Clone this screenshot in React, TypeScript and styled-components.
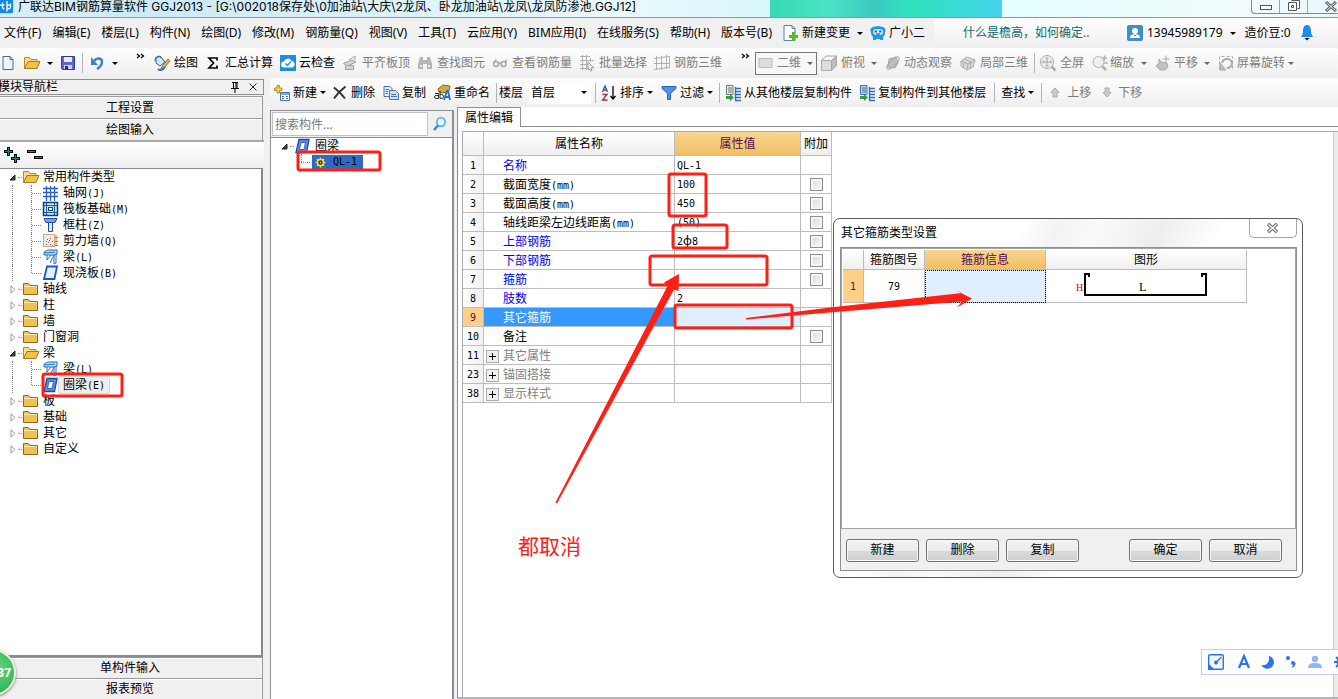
import React from 'react';
import styled, { createGlobalStyle, css } from 'styled-components';

const GlobalStyle = createGlobalStyle`
  * { box-sizing: border-box; }
  html, body { margin: 0; height: 100%; overflow: hidden; }
  body, button, input, select, table {
    font-family: "Noto Sans", "Noto Sans CJK SC", sans-serif;
    font-size: 12px;
    line-height: 16px;
    color: #000;
  }
  button, input, select { margin: 0; padding: 0; border: 0; background: none; }
  ul { margin: 0; padding: 0; list-style: none; }
`;

/* ---------- shared pieces ---------- */

const HalfWidth = styled.span`
  font-family: "DejaVu Sans Mono", monospace;
  font-size: 10px;
  line-height: 12px;
`;

/* Grid and tree labels set their Latin characters half as wide as the Chinese ones. */
const Mixed = ({ text }: { text: string }) => (
  <>
    {text.split(/([\x20-\x7e]+)/).map((part, i) =>
      i % 2 ? <HalfWidth key={i}>{part}</HalfWidth> : part
    )}
  </>
);

const Caret = styled.i<{ $dim?: boolean; $gap?: number }>`
  width: 0;
  height: 0;
  flex: none;
  margin-left: ${p => p.$gap ?? 0}px;
  border: 3px solid transparent;
  border-bottom: 0;
  border-top-color: ${p => (p.$dim ? '#666' : '#000')};
`;

const Svg = styled.svg`
  display: block;
  flex: none;
  overflow: visible;
`;

type IconName = keyof typeof shapes;

const shapes = {
  app: (
    <>
      <rect x="-1" y="-1" width="16" height="16" rx="2" fill="#1488e4" />
      <path d="M0 6h5M8 1v12M8 6h4M3 3v4a2 2 0 0 0 2 3M12 4v4a2 2 0 0 1-4 0" fill="none" stroke="#fff" strokeWidth="1.500" />
    </>
  ),
  file: <path d="M3 1.500h7l3 3v10H3z M10 1.500v3h3" fill="#eef5fc" stroke="#4c6a8c" />,
  folderOpen: (
    <>
      <path d="M.5 13.500v-11h5l1.500 2H13v4" fill="#f9dc86" stroke="#b48a2c" />
      <path d="M.5 13.500 4 6.500h12l-3 7z" fill="#f3bf4b" stroke="#a67a1e" />
    </>
  ),
  save: (
    <>
      <path d="M1.500 1.500h13v13h-12l-1-1z" fill="#5a68cf" stroke="#2c3a9a" />
      <path d="M4 2h8v5H4z" fill="#e9edff" />
      <path d="M4 10h8v4H4z" fill="#cfd5e8" />
      <path d="M5 11h3v3H5z" fill="#26307c" />
    </>
  ),
  undo: (
    <>
      <path d="M5 6c3-4 8-3 8 1 0 3-2 5-5 7" fill="none" stroke="#3f7fd0" strokeWidth="2.500" />
      <path d="M2 2v8h7z" fill="#3f7fd0" />
    </>
  ),
  paint: (
    <>
      <path d="M2 3l4-2 5 6-5 4-4-3z" fill="#d6e6f8" stroke="#355f92" />
      <path d="M1 6c0-5 4-6 6-3" fill="none" stroke="#355f92" />
      <path d="M9 10l5-6 2 2-5 6-5 3z" fill="#e7b94d" stroke="#6a5a30" strokeWidth=".8" />
      <path d="M4 14c2 2 5 1 7-2" fill="none" stroke="#2f74c8" strokeWidth="2" />
    </>
  ),
  sum: <path d="M12 5.500V3H4l4.500 5L4 13h8v-2.500" fill="none" stroke="#000" strokeWidth="1.700" />,
  cloud: (
    <>
      <rect width="16" height="16" fill="#1d8fd6" />
      <path d="M4 12.500a3 3 0 0 1 0-6 4 4 0 0 1 7.500-.5 3.300 3.300 0 0 1 .5 6.500z" fill="#fff" />
      <path d="M5.500 8.500l2 2 3.500-4" fill="none" stroke="#1d8fd6" strokeWidth="1.300" />
    </>
  ),
  align: (
    <g fill="#d4d4d4" stroke="#a2a2a2">
      <path d="M1.500 8.500 10 5l4 2-8.500 4z" />
      <path d="M3.500 10.500h8v4h-8z" />
      <path d="M7 5l6-4v4" fill="none" />
    </g>
  ),
  find: (
    <g fill="#b5b5b5">
      <path d="M3 2h3v3h4V2h3l2 7v5h-5V9H6v5H1V9z" />
      <path d="M3 10h2v2H3zM11 10h2v2h-2z" fill="#eee" />
    </g>
  ),
  glasses: (
    <g fill="none" stroke="#a6a6a6" strokeWidth="1.500">
      <circle cx="4" cy="9" r="2.500" />
      <circle cx="11.500" cy="9" r="2.500" />
      <path d="M6.500 8.500h2.500M2 8 4 4.500M14 8V4.500" />
    </g>
  ),
  batch: (
    <g fill="none" stroke="#b0b0b0">
      <path d="M1 1.500h10M1 5.500h14M1 9.500h8M1 13.500h8M3.500 0v15M7.500 0v15M11.500 3v4" />
      <path d="M9 7l6 6h-3l1 3-4-2z" fill="#eee" stroke="#999" />
    </g>
  ),
  grid3d: (
    <path d="M0 3.500 15 1.500M0 8.500h15M0 14.500l15-2M2.500 1v14M7.500 1v14M12.500 0v14M15.500 1v12" fill="none" stroke="#b0b0b0" />
  ),
  plane: <rect x="1" y="3.500" width="13" height="9" fill="#ddd" stroke="#bbb" />,
  cube: (
    <g stroke="#a8a8a8" strokeLinejoin="round">
      <path d="M.5 5.500h10v10h-10z" fill="#ddd" />
      <path d="M.5 5.500 5 1h10.500l-5 4.500z" fill="#f5f5f5" />
      <path d="M10.500 5.500l5-4.500v9.500l-5 5z" fill="#bdbdbd" />
    </g>
  ),
  orbit: (
    <g fill="#bfbfbf" stroke="#a8a8a8">
      <path d="M4 4l7-2 2 6-3 5-7-1z" />
      <ellipse cx="8" cy="8" rx="8" ry="3" fill="none" transform="rotate(-45 8 8)" />
    </g>
  ),
  localCube: (
    <g fill="#dedede" stroke="#a8a8a8">
      <path d="M1 6l6-4 8 3-2 7-6 3-6-4z" />
      <path d="M1 6l7 3 7-4M8 9l-1 6M4 4l7 3-1 6M4 7.500 3.500 13" fill="none" />
    </g>
  ),
  fit: (
    <g fill="none" stroke="#aaa">
      <circle cx="7" cy="7" r="6.500" fill="#eee" />
      <path d="M7 2.500v9M2.500 7h9M5.500 4 7 2.500 8.500 4M5.500 10 7 11.500 8.500 10M4 5.500 2.500 7 4 8.500M10 5.500 11.500 7 10 8.500" />
      <path d="M11.500 11.500l4 4" strokeWidth="2.500" />
    </g>
  ),
  zoom: (
    <g fill="none" stroke="#b2b2b2">
      <circle cx="6.500" cy="7" r="5.500" fill="#eee" />
      <path d="M10 11l4 4" strokeWidth="2.500" />
      <path d="M10 3h5M12.500.5v5M12 8h4" strokeWidth="1.500" />
    </g>
  ),
  pan: (
    <g fill="#c2c2c2" stroke="#aaa">
      <path d="M3 9l3-2 6 1 1 4-3 3H5l-4-4z" />
      <path d="M11 .5v7M7.500 4h7" fill="none" />
      <path d="M4 8V4l2 3" />
    </g>
  ),
  rotate: (
    <g fill="none" stroke="#a8a8a8">
      <path d="M1.500 14.500v-13h13v13" strokeDasharray="3 2" />
      <path d="M4 8a5 4.500 0 1 1 5 5" strokeWidth="2" />
      <path d="M2 8v7h6z" fill="#c0c0c0" />
    </g>
  ),
  newItem: (
    <>
      <path d="M6.500 7.500h9v8h-9z" fill="#fff" stroke="#4774b8" />
      <path d="M7 8h8v2H7z" fill="#79a7e6" />
      <path d="M8 11.500h2M12 11.500h2M8 13.500h2M12 13.500h2" stroke="#4774b8" />
      <path d="M3 .5h2.500V3H8v2.500H5.500V8H3V5.500H.5V3H3z" fill="#f4d53b" stroke="#a88210" strokeWidth=".8" />
    </>
  ),
  remove: <path d="M2 2.500c4 3 8 7 11 11M13.500 1.500C9 5 5 9 2 13.500" fill="none" stroke="#333" strokeWidth="2" />,
  copy: (
    <g stroke="#4a73b6">
      <path d="M1 1.500h6l2 2v8H1z" fill="#e4eefb" />
      <path d="M6.500 5.500h6l3 3v6h-9z" fill="#cfe0f7" />
      <path d="M2.500 4.500H6M2.500 6.500H5M2.500 8.500H5M8 9.500h5M8 11.500h6" fill="none" />
    </g>
  ),
  rename: (
    <>
      <path d="M4 4l5-4 7 1-1 5-6 2-4-1z" fill="#d8a83c" stroke="#66501c" strokeWidth=".8" />
      <path d="M1 8.500h3.500v5H2a1.300 1.300 0 0 1 0-3h2M6 6v7.500h1.500a1.800 1.800 0 0 0 0-4H6" fill="none" stroke="#333" />
      <path d="M10 15l3-9h1l2 9M11 12h4" fill="none" stroke="#2d6bd0" strokeWidth="1.800" />
    </>
  ),
  sort: (
    <>
      <path d="M1.500 7 4 1l2.500 6M2.500 5h3" fill="none" stroke="#33588f" strokeWidth="1.300" />
      <path d="M1.500 9.500H6L1.500 15h5" fill="none" stroke="#9c2e36" strokeWidth="1.300" />
      <path d="M12 1v12M9.500 11l2.500 3 2.500-3" fill="none" stroke="#000" strokeWidth="1.300" />
    </>
  ),
  filter: <path d="M1 1.500h14v2L9.500 8.500v6h-3v-6L1 3.500z" fill="#4d90e8" stroke="#2c62b8" />,
  floorCopy: (
    <>
      <path d="M1.500.5H8v9H1.500z" fill="#e6e6e6" stroke="#777" />
      <path d="M3 3h4M3 5h4M3 7h4" stroke="#777" />
      <path d="M10.500 2v13M10 3.500h6M10 6.500h6M10 9.500h6M10 12.500h6M10 15.500h6" stroke="#3070b8" strokeWidth="1.400" />
      <path d="M1 11h4V9l4 3.500L5 16v-2H1z" fill="#2f9e49" />
    </>
  ),
  floorPaste: (
    <>
      <path d="M1.500.5H8v9H1.500z" fill="#bcd5f3" stroke="#3f70b0" />
      <path d="M3 3h4M3 5h4M3 7h4" stroke="#3f70b0" />
      <path d="M10.500 2v13M10 3.500h6M10 6.500h6M10 9.500h6M10 12.500h6M10 15.500h6" stroke="#3070b8" strokeWidth="1.400" />
      <path d="M1 11h4V9l4 3.500L5 16v-2H1z" fill="#2f9e49" />
    </>
  ),
  up: <path d="M8 3l4 4.500H10V12H6V7.500H4z" fill="#ccc" stroke="#aaa" />,
  down: <path d="M8 12l4-4.500H10V3H6v4.500H4z" fill="#ccc" stroke="#aaa" />,
  change: (
    <>
      <path d="M1 .5h8l3 3v12H1z" fill="#fff" stroke="#5b7fa8" />
      <path d="M9 .5v3h3" fill="none" stroke="#5b7fa8" />
      <path d="M9 8h3v3h3v3h-3v3H9v-3H6v-3h3z" fill="#53b635" transform="translate(0 -1)" />
    </>
  ),
  mascot: (
    <>
      <path d="M3 2c2 0 3-1 5-1s3 1 5 1c3 1 3 5 2 5 0 3-1 4-2 5v3h-3v-1H6v1H3v-3C2 11 1 10 1 7 0 6 0 3 3 2z" fill="#1f97e6" />
      <rect x="3" y="4" width="10" height="6" rx="3" fill="#bfe6fd" />
      <circle cx="5.800" cy="6.500" r="1" fill="#114a86" />
      <circle cx="10.200" cy="6.500" r="1" fill="#114a86" />
      <path d="M6 8.500c1 1 3 1 4 0" fill="none" stroke="#114a86" />
    </>
  ),
  user: (
    <>
      <rect width="16" height="16" rx="2" fill="#3c8fc8" />
      <circle cx="8" cy="6" r="3" fill="#fff" />
      <path d="M3 13c0-3 2-4 5-4s5 1 5 4z" fill="#fff" />
      <path d="M6.500 9.500 8 11l1.500-1.500" fill="none" stroke="#3c8fc8" />
    </>
  ),
  bell: (
    <>
      <path d="M8 0c3 0 4 3 4 6 0 3 1 4 2 6H2c1-2 2-3 2-6 0-3 1-6 4-6z" fill="#1e8af0" />
      <path d="M5.500 13h5L8 15.500z" fill="#111" />
    </>
  ),
  folder: (
    <>
      <path d="M.5 13.500v-11h5l1.500 2h7.500v9z" fill="#eec257" stroke="#8f6a1c" />
      <path d="M1 5.500h13" stroke="#fbe7a8" />
    </>
  ),
  axis: (
    <path d="M0 3.500h15M0 7.500h15M0 11.500h15M3.500 1v15M7.500 1v15M11.500 1v15" fill="none" stroke="#2b5fc0" strokeWidth="1.300" />
  ),
  raft: (
    <>
      <rect x=".5" y="1.500" width="14" height="13" fill="#cde3f5" stroke="#0d3f79" strokeWidth="1.500" />
      <path d="M3.500 2v12M11.500 2v12M1 4.500h13M1 11.500h13" stroke="#1a5a9c" />
      <rect x="5.500" y="6.500" width="4" height="3" fill="#fff" stroke="#0d3f79" />
    </>
  ),
  column: (
    <>
      <path d="M1 1.500h13l-2 4H3z" fill="#6fa3ea" stroke="#1c4aa5" />
      <path d="M5.500 5.500h4v9h-4z" fill="#d7e7fb" stroke="#1c4aa5" />
    </>
  ),
  wall: (
    <>
      <rect x=".5" y="1.500" width="11" height="12" fill="#ece8e4" stroke="#d8a87c" />
      <path d="M3 11.500h1M5 9.500h1M7 11.500h1M9 8.500h1M4 6.500h1M7 5.500h1M9 12.500h1M3 8.500h1M6 7.500h1" stroke="#666" />
      <path d="M13 2v11M12 4.500h3M12 8.500h3M12 12.500h3" stroke="#dd6f1e" />
    </>
  ),
  beam: (
    <>
      <path d="M1 3l4-2h9v4l-3 1H1z" fill="#b9dcf7" stroke="#2173c0" />
      <path d="M4 6v5l4-5M7 14l4-8v9l2-1V5M2 4l10-1" fill="none" stroke="#2173c0" />
    </>
  ),
  slab: <path d="M4 1.500h10l-2.500 12.500H1z" fill="#e1eeff" stroke="#2256bd" strokeWidth="1.800" />,
  ring: (
    <>
      <path d="M4 1.500h10L11.500 14.500H1z" fill="#5b8fe6" stroke="#1d4aa8" strokeWidth="1.300" />
      <path d="M6 4.500h4.500L9 11.500H4.500z" fill="#fff" stroke="#1d4aa8" strokeWidth=".8" />
    </>
  ),
  gear: (
    <>
      <path d="M8 2v12M2 8h12M3.800 3.800l8.400 8.400M12.200 3.800l-8.400 8.400" stroke="#ffee1c" strokeWidth="2" />
      <circle cx="8" cy="8" r="3.500" fill="#222" stroke="#ffee1c" strokeWidth="1.500" />
      <circle cx="8" cy="8" r="1" fill="#ffee1c" />
    </>
  ),
  search: (
    <>
      <circle cx="9" cy="6" r="4.200" fill="#e6f5ff" stroke="#6fb8ea" strokeWidth="2" />
      <path d="M6 9.500 2 14" stroke="#3f86cc" strokeWidth="2.500" />
    </>
  ),
  expandAll: (
    <>
      <path d="M0 4.500h9M4.500 0v9M7 11.500h9M11.500 7v9" stroke="#000" strokeWidth="3" />
      <path d="M1 4.500h7M4.500 1v7M8 11.500h7M11.500 8v7" stroke="#0a8f86" />
    </>
  ),
  collapseAll: (
    <>
      <path d="M0 4.500h9M7 10.500h9" stroke="#000" strokeWidth="3" />
      <path d="M1 4.500h7M8 10.500h7" stroke="#0a8f86" />
    </>
  ),
  pin: <path d="M5 3.500h6M6.500 3v6M10 3v6M9 3v6M4 9.500h8M8 10v4" fill="none" stroke="#000" />,
  close: <path d="M4.500 4.500l7 7M11.500 4.500l-7 7" fill="none" stroke="#222" />,
  chevrons: <path d="M1 1l2.500 2L1 5M5 1l2.500 2L5 5" fill="none" stroke="#000" strokeWidth="1.300" />
};

const Icon = ({ name, size = 16 }: { name: IconName; size?: number }) => (
  <Svg width={size} height={size} viewBox="0 0 16 16" aria-hidden="true">
    {shapes[name]}
  </Svg>
);

/* ---------- frame ---------- */

const Page = styled.div`
  position: relative;
  display: flex;
  flex-direction: column;
  height: 100vh;
  overflow: hidden;
  background: #f0f0f0;
  white-space: nowrap;
`;

const TitleBar = styled.header`
  display: flex;
  flex: none;
  align-items: flex-start;
  gap: 4px;
  height: 18px;
  border-bottom: 1px solid #8d9a9c;
  background: linear-gradient(90deg, #d7eef9, #cdeaf6 12%, #e9f9fd 46%, #d9f6fb 57%, #e4fdfd 76%, #f2fcfd 92%, #eaf8fb);
`;

const Title = styled.h1`
  margin: 0;
  flex: 1;
  font-family: Inter, "Noto Sans CJK SC", sans-serif;
  font-size: 12px;
  line-height: 14px;
  font-weight: 400;
`;

const GlassTab = styled.div`
  flex: none;
  width: 232px;
  height: 17px;
  margin-right: 245px;
  background: linear-gradient(90deg, #35d9b4, #4be3c4 25%, #3cc9c1 45%, #30e2bd 60%, #45d3ec);
`;

const WindowButtons = styled.div`
  display: flex;
  flex: none;
  width: 87px;
  height: 14px;
  overflow: hidden;
  border: 1px solid #7e8b94;
  border-width: 0 0 1px 1px;
  border-radius: 0 0 0 4px;
`;

const WindowButton = styled.button`
  display: grid;
  place-items: center;
  flex: none;
  width: 28px;
  border-right: 1px solid #98a5ad;
  &:last-child { width: 46px; border: 0; }
`;

const Bars = styled.div`
  display: flex;
  flex: none;
  height: 30px;
`;

const Strip = styled.div<{ $width?: number; $grow?: boolean; $pad?: number }>`
  display: flex;
  flex: ${p => (p.$grow ? '1 1 0' : 'none')};
  align-items: center;
  ${p => p.$width && css`width: ${p.$width}px;`}
  min-width: 0;
  padding-left: ${p => p.$pad ?? 0}px;
  overflow: hidden;
  border-radius: 3px;
  background: linear-gradient(#fdfdfd, #f6f6f6 55%, #eee);
`;

const MenuList = styled.nav`
  display: flex;
  width: 934px;
  flex: none;
  align-items: center;
  padding-left: 4px;
  gap: 11px;
`;

const MenuExtras = styled.div`
  display: flex;
  align-items: center;
  gap: 7px;
  button { gap: 3px; }
`;

const MenuItem = styled.button`
  display: flex;
  align-items: center;
`;

const Tool = styled.button<{ $end?: number; $gap?: number }>`
  display: flex;
  flex: none;
  align-items: center;
  gap: ${p => p.$gap ?? 4}px;
  margin-right: ${p => p.$end ?? 8}px;
  height: 20px;
  &:disabled { color: #7d7d7d; }
`;

const Rule = styled.i<{ $end?: number }>`
  flex: none;
  width: 1px;
  height: 20px;
  margin-right: ${p => p.$end ?? 6}px;
  background: #b4b4b4;
`;

const Overflow = styled.button`
  align-self: flex-start;
  margin: 5px 5px 0 auto;
`;

const ViewSelect = styled.label`
  display: flex;
  flex: none;
  align-items: center;
  width: 62px;
  height: 23px;
  padding: 0 3px 0 2px;
  margin-right: 4px;
  border: 1px solid #777;
  background: #f7f7f7;
  select { flex: 1; min-width: 0; appearance: none; margin-left: 3px; color: #7d7d7d; opacity: 1; }
`;

const FloorSelect = styled.label`
  display: flex;
  flex: none;
  align-items: center;
  width: 62px;
  height: 22px;
  padding: 0 4px 0 2px;
  margin: 0 4px 0 6px;
  background: #fff;
  select { flex: 1; min-width: 0; appearance: none; }
`;

const Tip = styled.a`
  margin: 0 auto 0 29px;
  color: #13696c;
  text-decoration: none;
`;

const Body = styled.div`
  display: flex;
  flex: 1;
  min-height: 0;
  gap: 6px;
`;

/* ---------- navigation column ---------- */

const Nav = styled.aside`
  display: flex;
  flex: none;
  flex-direction: column;
  width: 264px;
  padding-top: 1px;
`;

const NavTitle = styled.div`
  display: flex;
  flex: none;
  align-items: center;
  height: 16px;
  margin-bottom: 1px;
  border: 1px solid #8f8f8f;
  border-left: 0;
  span { flex: 1; margin-left: -2px; }
  button { width: 18px; }
`;

const NavButton = styled.button<{ $height?: number }>`
  flex: none;
  height: ${p => p.$height ?? 22}px;
  margin-right: 1px;
  padding-right: 2px;
  border: solid #9a9a9a;
  border-width: 1px 1px 0 0;
  box-shadow: inset 0 1px #fff;
`;

const NavTools = styled.div`
  display: flex;
  flex: none;
  align-items: center;
  gap: 7px;
  height: 28px;
  padding-left: 4px;
  border-top: 2px solid #a8a8a8;
  background: linear-gradient(#fff, #eee);
`;

const NavTree = styled.ul`
  flex: 1;
  min-height: 0;
  margin-right: 1px;
  overflow: hidden;
  border: solid #848a94;
  border-width: 1px 2px 2px 0;
  background: #fff;
`;

const TreeRow = styled.li<{ $child?: boolean }>`
  display: flex;
  align-items: center;
  height: 16px;
  padding-left: ${p => (p.$child ? 12 : 0)}px;
`;

const Twisty = styled.span`
  display: flex;
  align-items: center;
  width: 23px;
  padding-left: 9px;
  gap: 2px;
  &::after { content: ""; width: 4px; border-top: 1px dotted #999; }
`;

const Guide = styled.i<{ $w: number; $last?: boolean }>`
  flex: none;
  align-self: flex-start;
  width: ${p => p.$w}px;
  height: ${p => (p.$last ? 8 : 16)}px;
  border-left: 1px dotted #888;
`;

const Branch = styled.i`
  flex: none;
  width: 9px;
  margin-left: -11px;
  margin-right: 2px;
  border-top: 1px dotted #888;
`;

const TreeLabel = styled.span<{ $picked?: boolean }>`
  padding: 0 4px;
  ${p => p.$picked && css`
    border-radius: 2px;
    background: #eee;
    box-shadow: 0 0 0 1px #d5d5d5;
  `}
`;

const OpenMark = () => (
  <Svg width={7} height={7} viewBox="0 0 7 7"><path d="M6 1v5H1z" fill="#404040" stroke="#222" /></Svg>
);
const ClosedMark = () => (
  <Svg width={7} height={9} viewBox="0 0 7 9"><path d="M2 .8 5.800 4.500 2 8.200z" fill="#fff" stroke="#9a9a9a" /></Svg>
);

type Branches = { label: string; items?: [IconName, string, boolean?][] };

const navGroups: Branches[] = [
  {
    label: '常用构件类型',
    items: [
      ['axis', '轴网(J)'], ['raft', '筏板基础(M)'], ['column', '框柱(Z)'],
      ['wall', '剪力墙(Q)'], ['beam', '梁(L)'], ['slab', '现浇板(B)']
    ]
  },
  { label: '轴线' }, { label: '柱' }, { label: '墙' }, { label: '门窗洞' },
  { label: '梁', items: [['beam', '梁(L)'], ['ring', '圈梁(E)', true]] },
  { label: '板' }, { label: '基础' }, { label: '其它' }, { label: '自定义' }
];

/* ---------- work area ---------- */

const Work = styled.main`
  display: flex;
  flex: 1;
  flex-direction: column;
  min-width: 0;
`;

const WorkTools = styled(Strip)`
  flex: none;
  height: 29px;
`;

const Panes = styled.div`
  display: flex;
  flex: 1;
  min-height: 0;
  gap: 3px;
`;

const PartsPane = styled.section`
  display: flex;
  flex: none;
  flex-direction: column;
  width: 184px;
  margin-top: 3px;
  border: solid #8b8f98;
  border-width: 1px 2px 0 1px;
  background: #fff;
`;

const SearchRow = styled.form`
  display: flex;
  flex: none;
  height: 27px;
  padding: 1px;
  border-bottom: 1px solid #8b8f98;
  background: #f0f0f0;
  input {
    width: 156px;
    height: 24px;
    padding: 0 2px;
    border: 1px solid #bcc3cf;
    background: #fff;
  }
  input::placeholder { color: #7a7a7a; opacity: 1; }
  button { display: grid; flex: 1; place-items: center; }
`;

const PartsRow = styled.li<{ $indent: number }>`
  display: flex;
  align-items: center;
  height: 16px;
  padding-left: ${p => p.$indent}px;
`;

const PickedPart = styled.span`
  display: flex;
  align-items: center;
  gap: 6px;
  width: 51px;
  height: 14px;
  padding-left: 2px;
  background: #316ac5;
`;

const PropsPane = styled.section`
  display: flex;
  flex: 1;
  flex-direction: column;
  min-width: 0;
  border-left: 1px solid #8b8f98;
  border-bottom: 2px solid #b5b5b5;
  background: #fff;
`;

const TabRow = styled.div`
  display: flex;
  flex: none;
  height: 20px;
  &::after { content: ""; flex: 1; border-bottom: 1px solid #8b8f98; }
`;

const Tab = styled.button`
  width: 63px;
  border: solid #8b8f98;
  border-width: 1px 1px 0 0;
`;

const PropsBody = styled.div`
  display: flex;
  flex: 1;
  align-items: flex-start;
  min-height: 0;
  margin: 4px 0 0 4px;
  border: solid #a4a9b2;
  border-width: 1px 0 0 1px;
  &::after { content: ""; align-self: stretch; width: 4px; margin-left: auto; background: #ececec; border-left: 1px solid #ccc; }
`;

const Grid = styled.table<{ $head: number; $row: number }>`
  table-layout: fixed;
  border-collapse: separate;
  border-spacing: 0;
  th, td {
    height: ${p => p.$row}px;
    padding: 0;
    border: solid #bdbdbd;
    border-width: 0 1px 1px 0;
    font-weight: 400;
    text-align: center;
    overflow: hidden;
  }
  thead th { height: ${p => p.$head}px; background: linear-gradient(#fff, #efefef); }
  tbody th { background: linear-gradient(90deg, #fff, #f0f0f0); }
`;

const HotHead = styled.th`
  && { background: linear-gradient(#f7d594, #f2bf60); color: #5a0a52; }
`;

const RowHead = styled.th<{ $on?: boolean }>`
  ${p => p.$on && css`&& { background: #fdd08a; color: #5a0a52; }`}
`;

const NameCell = styled.td<{ $tone: string; $on?: boolean }>`
  && {
    text-align: left;
    color: ${p => p.$tone};
    ${p => p.$on && css`background: #3399ff;`}
  }
  div { display: flex; align-items: center; gap: 4px; height: 18px; padding: 2px 0 0 2px; }
  div > span:only-child { padding-left: 17px; }
`;

const ValueCell = styled.td<{ $on?: boolean }>`
  && { text-align: left; padding-left: 2px; ${p => p.$on && css`background: #dfefff;`} }
`;

const PlusBox = styled.button`
  display: grid;
  place-items: center;
  width: 13px;
  height: 13px;
  border: 1px solid #aaa;
  background: #f0f0f0;
`;

const Check = styled.input`
  && {
    display: block;
    appearance: none;
    width: 13px;
    height: 13px;
    margin: 0 auto;
    border: 1px solid #8e8f8f;
    background: linear-gradient(135deg, #d3d6da, #fafafa);
    box-shadow: inset 0 0 0 2px #f4f4f4;
  }
`;

type Prop = { no: number; name: string; value?: string; tone?: 'blue' | 'grey'; check?: boolean; on?: boolean };

const properties: Prop[] = [
  { no: 1, name: '名称', value: 'QL-1', tone: 'blue' },
  { no: 2, name: '截面宽度(mm)', value: '100', check: true },
  { no: 3, name: '截面高度(mm)', value: '450', check: true },
  { no: 4, name: '轴线距梁左边线距离(mm)', value: '(50)', check: true },
  { no: 5, name: '上部钢筋', value: '2ф8', tone: 'blue', check: true },
  { no: 6, name: '下部钢筋', tone: 'blue', check: true },
  { no: 7, name: '箍筋', tone: 'blue', check: true },
  { no: 8, name: '肢数', value: '2', tone: 'blue' },
  { no: 9, name: '其它箍筋', on: true },
  { no: 10, name: '备注', check: true },
  { no: 11, name: '其它属性', tone: 'grey' },
  { no: 23, name: '锚固搭接', tone: 'grey' },
  { no: 38, name: '显示样式', tone: 'grey' }
];

const toneColor = (p: Prop) =>
  p.on ? '#fff' : p.tone === 'blue' ? '#0000f0' : p.tone === 'grey' ? '#808080' : '#000';

/* ---------- floating parts ---------- */

const Dialog = styled.section`
  position: absolute;
  left: 833px;
  top: 218px;
  display: flex;
  flex-direction: column;
  width: 470px;
  height: 360px;
  padding: 0 5px 6px 6px;
  border: 1px solid #5b5b5b;
  border-radius: 7px;
  background: linear-gradient(115deg, #fff 30%, #f3f3f3 36%, #fafafa 42%, #eee 52%, #fff 62%);
`;

const DialogTitle = styled.header`
  display: flex;
  flex: none;
  justify-content: space-between;
  height: 28px;
  h2 { margin: 6px 0 0 1px; font-size: 12px; line-height: 16px; font-weight: 400; }
  button {
    display: grid;
    place-items: center;
    width: 48px;
    height: 19px;
    border: 1px solid #a5a5a5;
    border-top: 0;
    border-radius: 0 0 5px 5px;
  }
`;

const DialogBody = styled.div`
  display: flex;
  flex: 1;
  flex-direction: column;
  border: 1px solid #8e8e94;
  background: #f0f0f0;
`;

const DialogGrid = styled.div`
  flex: 1;
  padding: 1px 0 0 1px;
  border: 1px solid #a4a4ac;
  background: #fff;
`;

const DialogFooter = styled.footer`
  display: flex;
  flex: none;
  align-items: center;
  gap: 7px;
  height: 41px;
  padding: 1px 14px 0 5px;
`;

const PushButton = styled.button<{ $apart?: boolean }>`
  width: 73px;
  height: 23px;
  border: 1px solid #707070;
  border-radius: 3px;
  background: linear-gradient(#f3f3f3, #ebebeb 50%, #dadada 51%, #cfcfcf);
  box-shadow: inset 0 0 0 1px #fafafa;
  ${p => p.$apart && css`margin-left: auto;`}
`;

const InfoCell = styled.td`
  && { background: #dfefff; outline: 1px dotted #000; outline-offset: -1px; }
`;

const Bubble = styled.div`
  position: absolute;
  left: -31px;
  bottom: 3px;
  width: 47px;
  height: 47px;
  padding-right: 3px;
  border: 2px solid #e9efe9;
  border-radius: 50%;
  background: radial-gradient(circle at 60% 40%, #69d57f, #2fb350 70%, #177c36 72%);
  box-shadow: 0 1px 3px #777;
  color: #fff;
  font-size: 12px;
  line-height: 43px;
  font-weight: 700;
  text-align: right;
`;

const ImeBar = styled.div`
  position: absolute;
  right: 0;
  bottom: 24px;
  display: flex;
  align-items: center;
  gap: 8px;
  width: 137px;
  height: 26px;
  padding-left: 6px;
  overflow: hidden;
  border: 1px solid #c2cdec;
  border-right: 0;
  background: #fff;
  button { flex: none; }
`;

const Marks = styled.svg`
  position: absolute;
  inset: 0;
  width: 100%;
  height: 100%;
  pointer-events: none;
`;

const Note = styled.p`
  position: absolute;
  left: 518px;
  top: 531px;
  margin: 0;
  font-family: "Noto Sans CJK SC", sans-serif;
  font-size: 21px;
  line-height: 28px;
  color: #ff2015;
`;

const menus = [
  '文件(F)', '编辑(E)', '楼层(L)', '构件(N)', '绘图(D)', '修改(M)', '钢筋量(Q)', '视图(V)',
  '工具(T)', '云应用(Y)', 'BIM应用(I)', '在线服务(S)', '帮助(H)', '版本号(B)'
];

const viewTools: [IconName, string][] = [
  ['align', '平齐板顶'], ['find', '查找图元'], ['glasses', '查看钢筋量'], ['batch', '批量选择'], ['grid3d', '钢筋三维']
];

const markBoxes = [
  [43, 374, 79, 22], [298, 152, 82, 18], [669, 174, 37, 42], [673, 225, 54, 23],
  [650, 256, 117, 29], [675, 305, 117, 23]
];

export default function App() {
  return (
    <Page>
      <GlobalStyle />
      <TitleBar>
        <Icon name="app" size={14} />
        <Title>广联达BIM钢筋算量软件 GGJ2013 - [G:\002018保存处\0加油站\大庆\2龙凤、卧龙加油站\龙凤\龙凤防渗池.GGJ12]</Title>
        <GlassTab />
        <WindowButtons>
          <WindowButton aria-label="最小化">
            <Svg width={12} height={6}><rect x=".5" y="1.500" width="11" height="4" fill="#fff" stroke="#555" /></Svg>
          </WindowButton>
          <WindowButton aria-label="还原">
            <Svg width={12} height={12}>
              <path d="M3.500-.5h8v8h-2M.5 1.500h8v8h-8zM3.500 4.500h2v2h-2z" fill="#fff" stroke="#555" />
            </Svg>
          </WindowButton>
          <WindowButton aria-label="关闭">
            <Svg width={12} height={10}><path d="M1 0l10 9M11 0 1 9" stroke="#555" strokeWidth="3" /><path d="M1.500.5l9 8M10.500.5l-9 8" stroke="#fff" /></Svg>
          </WindowButton>
        </WindowButtons>
      </TitleBar>

      <Bars>
        <MenuList>
          {menus.map(m => <MenuItem key={m}>{m}</MenuItem>)}
          <MenuExtras>
            <MenuItem><Icon name="change" />新建变更<Caret $gap={4} /></MenuItem>
            <MenuItem><Icon name="mascot" />广小二</MenuItem>
          </MenuExtras>
        </MenuList>
        <Strip $width={189}><Tip href="#tip">什么是檐高，如何确定..</Tip></Strip>
        <Strip $grow $pad={4}>
          <Tool $end={9}><Icon name="user" />13945989179<Caret $gap={3} /></Tool>
          <Tool>造价豆:0</Tool>
          <Tool aria-label="消息"><Icon name="bell" /></Tool>
        </Strip>
      </Bars>

      <Bars>
        <Strip $width={150}>
          <Tool aria-label="新建文件"><Icon name="file" /></Tool>
          <Tool aria-label="打开" $end={7}><Icon name="folderOpen" /><Caret $gap={3} /></Tool>
          <Tool aria-label="保存" $end={6}><Icon name="save" /></Tool>
          <Rule />
          <Tool aria-label="撤销"><Icon name="undo" /><Caret $gap={3} /></Tool>
          <Overflow aria-label="更多"><Svg width={9} height={7}>{shapes.chevrons}</Svg></Overflow>
        </Strip>
        <Strip $width={605} $pad={4}>
          <Tool $end={7}><Icon name="paint" />绘图</Tool>
          <Tool $end={7}><Icon name="sum" />汇总计算</Tool>
          <Tool $end={7} $gap={3}><Icon name="cloud" />云检查</Tool>
          {viewTools.map(([icon, label]) => (
            <Tool key={label} disabled $end={7}><Icon name={icon} />{label}</Tool>
          ))}
          <Overflow aria-label="更多"><Svg width={9} height={7}>{shapes.chevrons}</Svg></Overflow>
        </Strip>
        <Strip $grow>
          <ViewSelect>
            <Icon name="plane" />
            <select aria-label="视图" disabled><option>二维</option></select>
            <Caret $dim />
          </ViewSelect>
          <Tool disabled><Icon name="cube" />俯视<Caret $dim $gap={2} /></Tool>
          <Tool disabled $gap={3}><Icon name="orbit" />动态观察</Tool>
          <Tool disabled $end={6}><Icon name="localCube" />局部三维</Tool>
          <Rule $end={5} />
          <Tool disabled><Icon name="fit" />全屏</Tool>
          <Tool disabled $gap={2}><Icon name="zoom" />缩放<Caret $dim $gap={5} /></Tool>
          <Tool disabled $gap={3}><Icon name="pan" />平移<Caret $dim $gap={3} /></Tool>
          <Tool disabled $gap={3}><Icon name="rotate" />屏幕旋转<Caret $dim /></Tool>
        </Strip>
      </Bars>

      <Body>
        <Nav>
          <NavTitle>
            <span>模块导航栏</span>
            <button aria-label="固定"><Icon name="pin" /></button>
            <button aria-label="关闭"><Icon name="close" /></button>
          </NavTitle>
          <NavButton>工程设置</NavButton>
          <NavButton>绘图输入</NavButton>
          <NavTools>
            <button aria-label="全部展开"><Icon name="expandAll" /></button>
            <button aria-label="全部折叠"><Icon name="collapseAll" /></button>
          </NavTools>
          <NavTree>
            {navGroups.map(g => (
              <React.Fragment key={g.label}>
                <TreeRow>
                  <Twisty>{g.items ? <OpenMark /> : <ClosedMark />}</Twisty>
                  <Icon name={g.items ? 'folderOpen' : 'folder'} />
                  <TreeLabel>{g.label}</TreeLabel>
                </TreeRow>
                {g.items?.map(([icon, label, picked], i) => (
                  <TreeRow key={label} $child>
                    <Guide $w={19} />
                    <Guide $w={12} $last={i === g.items!.length - 1} />
                    <Branch />
                    <Icon name={icon} />
                    <TreeLabel $picked={picked}><Mixed text={label} /></TreeLabel>
                  </TreeRow>
                ))}
              </React.Fragment>
            ))}
          </NavTree>
          <NavButton $height={21}>单构件输入</NavButton>
          <NavButton $height={21}>报表预览</NavButton>
        </Nav>

        <Work>
          <WorkTools $pad={4}>
            <Tool $gap={3} $end={6}><Icon name="newItem" />新建<Caret /></Tool>
            <Tool $gap={3}><Icon name="remove" />删除</Tool>
            <Tool $gap={3}><Icon name="copy" />复制</Tool>
            <Tool $end={6}><Icon name="rename" />重命名</Tool>
            <Rule $end={2} />
            <span>楼层</span>
            <FloorSelect>
              <select aria-label="楼层"><option>首层</option></select>
              <Caret />
            </FloorSelect>
            <Rule $end={5} />
            <Tool $gap={3}><Icon name="sort" />排序<Caret /></Tool>
            <Tool $gap={3} $end={6}><Icon name="filter" />过滤<Caret /></Tool>
            <Rule $end={5} />
            <Tool $gap={3} $end={7}><Icon name="floorCopy" />从其他楼层复制构件</Tool>
            <Tool $gap={3}><Icon name="floorPaste" />复制构件到其他楼层</Tool>
            <Rule />
            <Tool $gap={3} $end={7}>查找<Caret /></Tool>
            <Rule $end={5} />
            <Tool disabled><Icon name="up" />上移</Tool>
            <Tool disabled $gap={3}><Icon name="down" />下移</Tool>
          </WorkTools>

          <Panes>
            <PartsPane>
              <SearchRow>
                <input aria-label="搜索构件" placeholder="搜索构件..." />
                <button type="button" aria-label="搜索"><Icon name="search" /></button>
              </SearchRow>
              <ul>
                <PartsRow $indent={1}>
                  <Twisty><OpenMark /></Twisty>
                  <Icon name="ring" />
                  <TreeLabel>圈梁</TreeLabel>
                </PartsRow>
                <PartsRow $indent={30}>
                  <Guide $w={11} $last />
                  <Branch />
                  <PickedPart><Icon name="gear" size={13} /><Mixed text="QL-1" /></PickedPart>
                </PartsRow>
              </ul>
            </PartsPane>

            <PropsPane>
              <TabRow><Tab>属性编辑</Tab></TabRow>
              <PropsBody>
                <Grid $head={24} $row={19}>
                  <colgroup>
                    <col width={21} /><col width={191} /><col width={126} /><col width={31} />
                  </colgroup>
                  <thead>
                    <tr><th /><th>属性名称</th><HotHead>属性值</HotHead><th>附加</th></tr>
                  </thead>
                  <tbody>
                    {properties.map(p => (
                      <tr key={p.no}>
                        <RowHead $on={p.on}><Mixed text={String(p.no)} /></RowHead>
                        <NameCell $tone={toneColor(p)} $on={p.on}>
                          <div>
                            {p.tone === 'grey' && (
                              <PlusBox aria-label="展开">
                                <Svg width={9} height={9}><path d="M1 4.500h7M4.500 1v7" stroke="#000" /></Svg>
                              </PlusBox>
                            )}
                            <span><Mixed text={p.name} /></span>
                          </div>
                        </NameCell>
                        <ValueCell $on={p.on}><Mixed text={p.value ?? ''} /></ValueCell>
                        <td>{p.check && <Check type="checkbox" aria-label={p.name} />}</td>
                      </tr>
                    ))}
                  </tbody>
                </Grid>
              </PropsBody>
            </PropsPane>
          </Panes>
        </Work>
      </Body>

      <Dialog role="dialog" aria-label="其它箍筋类型设置">
        <DialogTitle>
          <h2>其它箍筋类型设置</h2>
          <button aria-label="关闭">
            <Svg width={12} height={10}><path d="M1 1l9 8M10 1 1 9" stroke="#666" strokeWidth="3.500" /><path d="M1.500 1.500l8 7M9.500 1.500l-8 7" stroke="#fff" strokeWidth="1.300" /></Svg>
          </button>
        </DialogTitle>
        <DialogBody>
          <DialogGrid>
            <Grid $head={20} $row={33}>
              <colgroup>
                <col width={21} /><col width={61} /><col width={121} /><col width={201} />
              </colgroup>
              <thead>
                <tr><th /><th>箍筋图号</th><HotHead>箍筋信息</HotHead><th>图形</th></tr>
              </thead>
              <tbody>
                <tr>
                  <RowHead $on><Mixed text="1" /></RowHead>
                  <td><Mixed text="79" /></td>
                  <InfoCell />
                  <td>
                    <Svg width={200} height={32} fontFamily="Liberation Serif, serif" fontSize="12">
                      <path d="M43 7V4h-4v21h121V4h-4v3" fill="none" stroke="#000" strokeWidth="2" />
                      <text x="30" y="21" fill="#e00000" fontSize="10">H</text>
                      <text x="93" y="21">L</text>
                    </Svg>
                  </td>
                </tr>
              </tbody>
            </Grid>
          </DialogGrid>
          <DialogFooter>
            <PushButton>新建</PushButton>
            <PushButton>删除</PushButton>
            <PushButton>复制</PushButton>
            <PushButton $apart>确定</PushButton>
            <PushButton>取消</PushButton>
          </DialogFooter>
        </DialogBody>
      </Dialog>

      <Bubble>37</Bubble>

      <ImeBar>
        <button aria-label="输入法">
          <Svg width={16} height={16}>
            <rect x=".7" y=".7" width="14.600" height="14.600" rx="1" fill="#f3f7ff" stroke="#2b72f6" strokeWidth="1.400" />
            <path d="M0 9l7 7H0z" fill="#2b72f6" /><path d="M8 8.500 13.500 3" stroke="#2b72f6" strokeWidth="1.300" /><circle cx="8" cy="8.500" r="2" fill="#2b72f6" />
          </Svg>
        </button>
        <button aria-label="英文">
          <Svg width={24} height={16}><path d="M7 14l5-12 5 12M8.500 10h7" fill="none" stroke="#2b72f6" strokeWidth="2.200" /></Svg>
        </button>
        <button aria-label="半角">
          <Svg width={12} height={16}><path d="M5 2a6.500 6.500 0 1 1-7.500 9C3 12 6 7 5 2z" fill="#2b72f6" /></Svg>
        </button>
        <button aria-label="标点">
          <Svg width={16} height={16}><circle cx="4" cy="4" r="2" fill="#2b72f6" /><circle cx="9" cy="9" r="2" fill="#2b72f6" /><path d="M11 9q0 3-3 4" fill="none" stroke="#2b72f6" strokeWidth="1.300" /></Svg>
        </button>
        <button aria-label="账户">
          <Svg width={14} height={16}><circle cx="7" cy="5" r="3.200" fill="#8fb5fb" /><path d="M0 14c0-4 3-5 7-5s7 1 7 5z" fill="#8fb5fb" /></Svg>
        </button>
        <button aria-label="设置">
          <Svg width={16} height={16}><path d="M11 1v14M4 8h14M6 3l10 10M16 3 6 13" stroke="#2b72f6" strokeWidth="2" /><circle cx="11" cy="8" r="4.500" fill="#2b72f6" /></Svg>
        </button>
      </ImeBar>

      <Note>都取消</Note>
      <Marks aria-hidden="true">
        <g fill="none" stroke="#ff2015" strokeWidth="3">
          {markBoxes.map(([x, y, w, h]) => (
            <rect key={`${x}-${y}`} x={x} y={y} width={w} height={h} rx="2" />
          ))}
        </g>
        <g fill="#ff2015">
          <path d="M555.500 502.500 667.500 286l-3.500-3.500 15-8.500-.5 17-4.500-1.500L557 503.500z" />
          <path d="M746 318 830 307.500l132-14.500-7-3 17 8.500-15 9 5-6L830 312.500 746 319.500z" />
        </g>
      </Marks>
    </Page>
  );
}
